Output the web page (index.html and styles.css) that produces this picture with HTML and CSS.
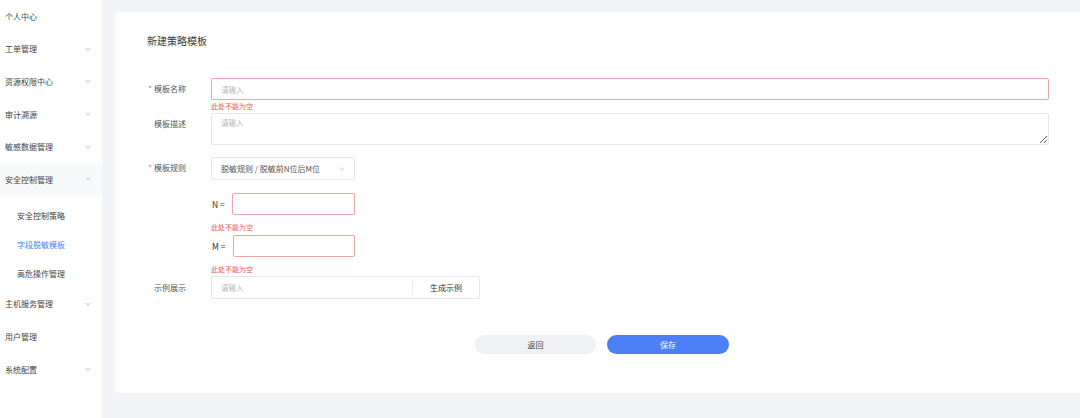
FILE: index.html
```html
<!DOCTYPE html>
<html lang="zh">
<head>
<meta charset="utf-8">
<link rel="stylesheet" href="styles.css">
</head>
<body>
<div class="app">
  <aside class="sidebar">
    <div class="menu-item"><span>个人中心</span></div>
    <div class="menu-item"><span>工单管理</span><i class="chev down"></i></div>
    <div class="menu-item"><span>资源权限中心</span><i class="chev down"></i></div>
    <div class="menu-item"><span>审计溯源</span><i class="chev down"></i></div>
    <div class="menu-item"><span>敏感数据管理</span><i class="chev down"></i></div>
    <div class="menu-item open"><span>安全控制管理</span><i class="chev up"></i></div>
    <div class="submenu">
      <div class="sub-item">安全控制策略</div>
      <div class="sub-item active">字段脱敏模板</div>
      <div class="sub-item">高危操作管理</div>
    </div>
    <div class="menu-item"><span>主机服务管理</span><i class="chev down"></i></div>
    <div class="menu-item"><span>用户管理</span></div>
    <div class="menu-item"><span>系统配置</span><i class="chev down"></i></div>
  </aside>
  <main class="main">
    <section class="card">
      <h1 class="title">新建策略模板</h1>
      <div class="form">
        <div class="row r-name">
          <label class="label"><em>*</em>模板名称</label>
          <div class="field">
            <div class="input error wide"><span class="ph">请输入</span></div>
            <div class="err">此处不能为空</div>
          </div>
        </div>
        <div class="row r-desc">
          <label class="label top">模板描述</label>
          <div class="field">
            <textarea class="textarea" placeholder="请输入"></textarea>
          </div>
        </div>
        <div class="row r-rule">
          <label class="label"><em>*</em>模板规则</label>
          <div class="field">
            <div class="select"><span>脱敏规则 / 脱敏前N位后M位</span><i class="chev down sel"></i></div>
          </div>
        </div>
        <div class="row r-n">
          <div class="label"></div>
          <div class="field">
            <div class="param"><span class="pl">N =</span><div class="input error small"></div></div>
            <div class="err err-n">此处不能为空</div>
          </div>
        </div>
        <div class="row r-m">
          <div class="label"></div>
          <div class="field">
            <div class="param"><span class="pl">M =</span><div class="input error small m"></div></div>
            <div class="err err-m">此处不能为空</div>
          </div>
        </div>
        <div class="row r-ex">
          <label class="label">示例展示</label>
          <div class="field">
            <div class="example"><span class="ph">请输入</span><span class="gen">生成示例</span></div>
          </div>
        </div>
      </div>
      <div class="actions">
        <button class="btn back">返回</button>
        <button class="btn save">保存</button>
      </div>
    </section>
  </main>
</div>
</body>
</html>
```
FILE: styles.css
```css
* { box-sizing: border-box; }
html, body { margin: 0; padding: 0; }
body {
  width: 1080px; height: 418px; overflow: hidden;
  font-family: "Noto Sans CJK SC", "Noto Sans", sans-serif;
  color: #333;
  background: #f3f4f8;
}
.app { display: flex; height: 418px; }
.sidebar { width: 102px; background: #fff; flex: none; }
.menu-item {
  height: 32.6px; display: flex; align-items: center; justify-content: space-between;
  padding: 0 12px 0 5px; font-size: 8px; color: #444;
}
.menu-item.open { background: #f8f9fb; }
.submenu { padding-top: 5px; }
.sub-item { height: 29px; line-height: 29px; padding-left: 17px; font-size: 8px; color: #444; }
.sub-item.active { color: #4d7ff5; }
.chev { display: block; width: 4px; height: 4px; border-right: 1px solid #d0d0d0; border-bottom: 1px solid #d0d0d0; }
.chev.down { transform: translateY(-1px) rotate(45deg); }
.chev.up { transform: translateY(1px) rotate(225deg); }
.main { flex: 1; padding: 12px 0 0 13px; }
.card {
  background: #fff; height: 381px; border-radius: 4px 0 0 4px;
  padding: 0 31px 0 32px;
}
.title { margin: 0; padding-top: 23px; font-size: 10px; font-weight: normal; line-height: 12px; color: #3a3a3a; height: 66px; }
.form { display: flex; flex-direction: column; }
.row { display: flex; }
.label {
  width: 39px; flex: none; margin-right: 25px; font-size: 8px; color: #555;
  text-align: right; white-space: nowrap; line-height: 22px;
}
.label em { font-style: normal; color: #e85b5b; margin-right: 2px; }
.label.top { line-height: 21px; }
.field { flex: 1; }
.input { height: 22px; border: 1px solid #e6e6e6; border-radius: 2px; background: #fff; display: flex; align-items: center; padding-left: 9px; }
.input.error { border-color: #eea4a4; }
.ph { font-size: 7.5px; color: #b8b8b8; }
.err { font-size: 7px; color: #e85b5b; line-height: 13px; height: 13px; }
.textarea {
  display: block; width: 100%; height: 32px; border: 1px solid #e6e6e6; border-radius: 2px;
  resize: vertical; padding: 3px 9px; font-family: inherit; font-size: 7.5px; outline: none;
}
.textarea::placeholder { color: #b8b8b8; }
.r-desc { margin-bottom: 12px; }
.select {
  width: 144px; height: 23px; border: 1px solid #e6e6e6; border-radius: 2px;
  display: flex; align-items: center; justify-content: space-between; padding: 0 10px 0 9px;
  font-size: 8px; color: #555; margin-bottom: 13px;
}
.chev.sel { border-color: #d6d6d6; }
.param { display: flex; align-items: center; height: 22px; }
.pl { width: 21px; font-size: 8.5px; color: #333; padding-left: 1px; }
.input.small { width: 123px; }
.input.small.m { width: 122px; margin-left: 1px; }
.err-n { height: 20px; padding-top: 4px; line-height: 16px; }
.err-m { height: 19px; padding-top: 5px; line-height: 14px; }
.example {
  width: 269px; height: 23px; border: 1px solid #e6e6e6; border-radius: 2px;
  display: flex; align-items: center; padding-left: 9px;
}
.example .ph { flex: 1; }
.gen {
  width: 67px; height: 15px; border-left: 1px solid #ececec; font-size: 8px; color: #333;
  display: flex; align-items: center; justify-content: center;
}
.r-ex .label { line-height: 23px; }
.actions { display: flex; gap: 11px; margin-top: 36px; margin-left: 328px; }
.btn {
  width: 121px; height: 19px; border: none; border-radius: 10px; font-family: inherit;
  font-size: 8px; padding: 0;
}
.btn.back { background: #f0f1f4; color: #444; }
.btn.save { background: #4d80f6; color: #fff; width: 122px; }
```
